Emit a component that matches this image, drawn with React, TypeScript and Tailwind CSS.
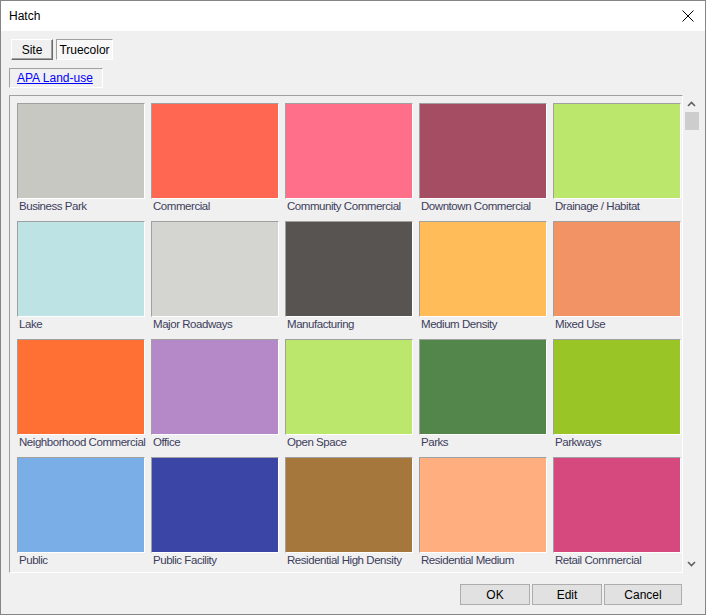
import React from 'react';

interface Swatch {
  name: string;
  color: string;
}

const swatches: Swatch[] = [
  { name: 'Business Park', color: '#c8c8c3' },
  { name: 'Commercial', color: '#ff6752' },
  { name: 'Community Commercial', color: '#ff6f89' },
  { name: 'Downtown Commercial', color: '#a54d62' },
  { name: 'Drainage / Habitat', color: '#bbe86c' },
  { name: 'Lake', color: '#bee3e5' },
  { name: 'Major Roadways', color: '#d4d4d0' },
  { name: 'Manufacturing', color: '#575451' },
  { name: 'Medium Density', color: '#ffbc59' },
  { name: 'Mixed Use', color: '#f19364' },
  { name: 'Neighborhood Commercial', color: '#ff7035' },
  { name: 'Office', color: '#b589c7' },
  { name: 'Open Space', color: '#bbe86c' },
  { name: 'Parks', color: '#52864a' },
  { name: 'Parkways', color: '#99c526' },
  { name: 'Public', color: '#7aaee6' },
  { name: 'Public Facility', color: '#3a45a5' },
  { name: 'Residential High Density', color: '#a6773c' },
  { name: 'Residential Medium', color: '#ffae80' },
  { name: 'Retail Commercial', color: '#d6497e' },
];

const SwatchCell: React.FC<{ item: Swatch }> = ({ item }) => (
  <div className="flex flex-col">
    <div
      className="w-[128px] h-[96px] border-t border-l border-[#a0a0a0] border-b-white border-r-white border-b border-r"
      style={{ backgroundColor: item.color }}
    />
    <div className="h-[16px] leading-[14px] pl-[2px] text-[11.5px] tracking-[-0.45px] text-[#3d3d5c] whitespace-nowrap">
      {item.name}
    </div>
  </div>
);

const DialogButton: React.FC<{ label: string; width: string }> = ({ label, width }) => (
  <button className={`${width} h-[21px] bg-[#e1e1e1] border border-[#adadad] text-[12px] text-black leading-none`}>
    {label}
  </button>
);

const App: React.FC = () => {
  return (
    <div
      className="w-[706px] h-[615px] border border-[#858585] bg-[#f0f0f0] flex flex-col overflow-hidden"
      style={{ fontFamily: '"Liberation Sans", Arial, sans-serif' }}
    >
      {/* title bar */}
      <div className="h-[30px] bg-white flex items-center justify-between pl-[8px] pr-[8px] shrink-0">
        <span className="text-[12px] text-black">Hatch</span>
        <svg width="12" height="12" viewBox="0 0 12 12" className="mr-[3px]">
          <path d="M0.5 0.5 L11.5 11.5 M11.5 0.5 L0.5 11.5" stroke="#000" strokeWidth="1" />
        </svg>
      </div>

      <div className="flex-1 flex flex-col pl-[8px]">
        {/* tabs */}
        <div className="flex gap-[3px] pt-[8px] pl-[2px]">
          <button className="w-[42px] h-[21px] bg-[#f0f0f0] border border-t-white border-l-white border-b-[#696969] border-r-[#696969] shadow-[inset_-1px_-1px_0_#a0a0a0] text-[12px] text-black leading-none">
            Site
          </button>
          <button className="w-[57px] h-[21px] bg-[#f8f8f8] border border-t-[#a0a0a0] border-l-[#a0a0a0] border-b-white border-r-white text-[12px] text-black leading-none">
            Truecolor
          </button>
        </div>

        {/* group link */}
        <div className="mt-[8px] w-[94px] h-[20px] border border-t-[#a0a0a0] border-l-[#a0a0a0] border-b-white border-r-white flex items-center pl-[7px]">
          <a className="text-[12px] text-[#0000ff] underline leading-none cursor-pointer">APA Land-use</a>
        </div>

        {/* swatch list + scrollbar */}
        <div className="mt-[7px] flex">
          <div className="w-[674px] h-[478px] border border-t-[#a0a0a0] border-l-[#a0a0a0] border-b-white border-r-white overflow-hidden pl-[7px] pt-[7px]">
            <div className="grid grid-cols-[repeat(5,128px)] gap-x-[6px] gap-y-[6px]">
              {swatches.map((s) => (
                <SwatchCell key={s.name} item={s} />
              ))}
            </div>
          </div>
          <div className="w-[17px] h-[478px] flex flex-col items-center">
            <svg width="9" height="6" viewBox="0 0 9 6" className="mt-[6px]">
              <path d="M1 5 L4.5 1.5 L8 5" stroke="#606060" strokeWidth="1.6" fill="none" />
            </svg>
            <div className="mt-[5px] w-[14px] h-[18px] bg-[#cdcdcd]" />
            <div className="flex-1" />
            <svg width="9" height="6" viewBox="0 0 9 6" className="mb-[6px]">
              <path d="M1 1 L4.5 4.5 L8 1" stroke="#606060" strokeWidth="1.6" fill="none" />
            </svg>
          </div>
        </div>

        {/* dialog buttons */}
        <div className="mt-[11px] flex justify-end gap-[2px] pr-[23px]">
          <DialogButton label="OK" width="w-[70px]" />
          <DialogButton label="Edit" width="w-[70px]" />
          <DialogButton label="Cancel" width="w-[78px]" />
        </div>
      </div>
    </div>
  );
};

export default App;
